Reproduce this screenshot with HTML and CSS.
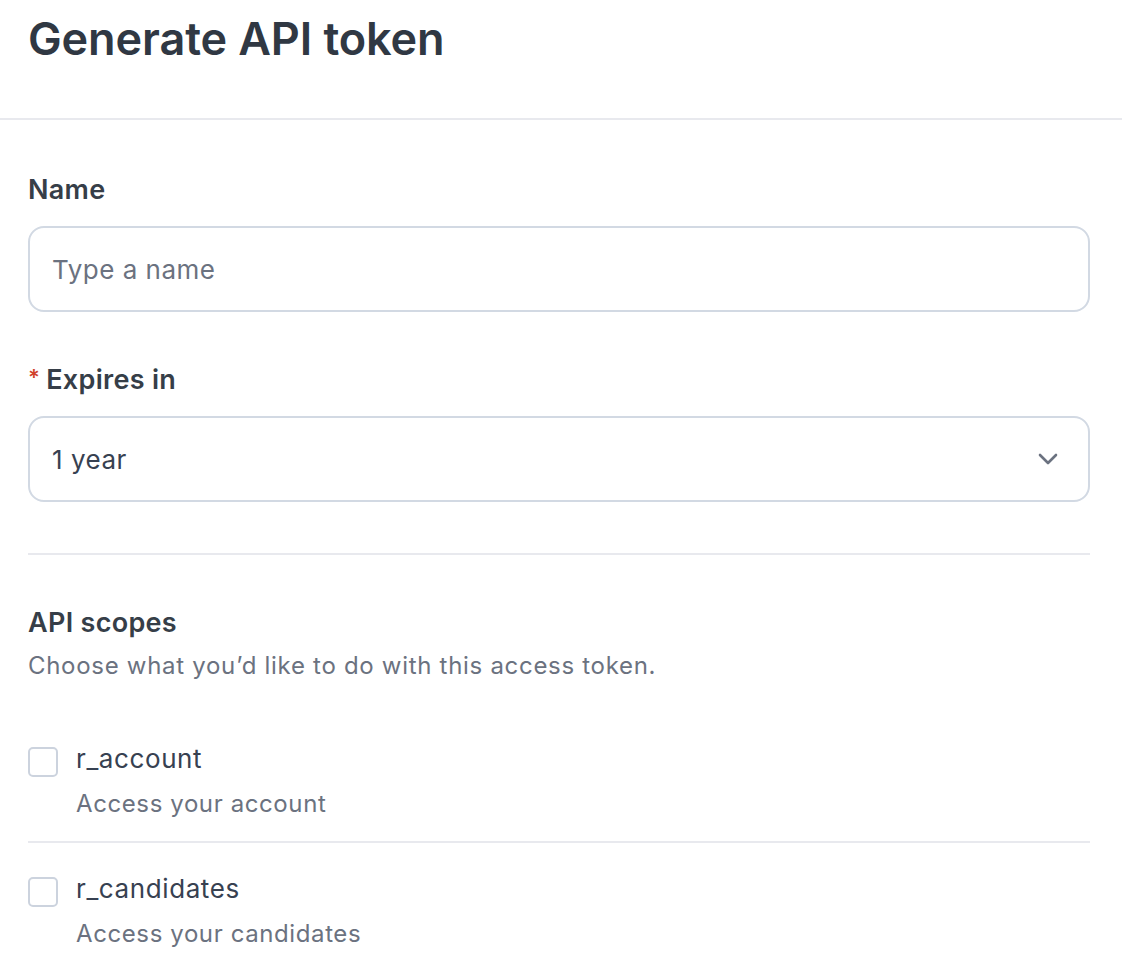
FILE: index.html
```html
<!DOCTYPE html>
<html>
<head>
<meta charset="utf-8">
<link rel="stylesheet" href="styles.css">
</head>
<body>
<header class="header">
  <h1 class="title">Generate API token</h1>
</header>
<main class="form">
  <div class="field">
    <label class="label">Name</label>
    <div class="input"><span class="placeholder">Type a name</span></div>
  </div>
  <div class="field">
    <label class="label"><span class="req">*</span>Expires in</label>
    <div class="input select">
      <span class="value">1 year</span>
      <svg class="chev" width="20" height="12" viewBox="0 0 20 12"><path d="M2 2 L10 10 L18 2" fill="none" stroke="#6b7280" stroke-width="2.6" stroke-linecap="round" stroke-linejoin="round"/></svg>
    </div>
  </div>
  <hr class="divider">
  <section class="scopes">
    <h2 class="label">API scopes</h2>
    <p class="help">Choose what you’d like to do with this access token.</p>
    <div class="scope">
      <span class="box"></span>
      <div class="scope-text">
        <div class="scope-name">r_account</div>
        <div class="scope-desc">Access your account</div>
      </div>
    </div>
    <div class="scope">
      <span class="box"></span>
      <div class="scope-text">
        <div class="scope-name">r_candidates</div>
        <div class="scope-desc">Access your candidates</div>
      </div>
    </div>
  </section>
</main>
</body>
</html>
```
FILE: styles.css
```css
html, body { margin: 0; padding: 0; background: #fff; }
body { font-family: Inter, "Noto Sans", sans-serif; color: #374151; }
.header { border-bottom: 2px solid #e8e9ee; padding: 8px 28px 48px; }
.title { margin: 0; font-size: 45px; line-height: 62px; font-weight: 600; color: #303843; letter-spacing: -0.1px; }
.form { padding: 0 32px 0 28px; }
.field { display: flex; flex-direction: column; }
.field:first-child { padding-top: 52px; }
.field + .field { margin-top: 50px; }
.label { margin: 0; font-size: 27px; line-height: 36px; font-weight: 600; color: #363e48; display: flex; align-items: center; letter-spacing: 0.3px; }
.req { color: #d0412a; font-size: 22px; margin-right: 6px; position: relative; top: -3px; }
.input { margin-top: 18px; height: 86px; box-sizing: border-box; border: 2px solid #d2d9e3; border-radius: 16px; display: flex; align-items: center; padding: 0 30px 0 22px; font-size: 26px; letter-spacing: 0.5px; }
.placeholder { color: #6b7280; }
.value { color: #374151; flex: 1; }
.select { justify-content: space-between; }
.chev { display: block; }
.divider { border: 0; border-top: 2px solid #e8e9ee; margin: 51px 0 0; }
.scopes { padding-top: 50px; }
.help { margin: 8px 0 0; font-size: 24px; line-height: 34px; color: #6b7280; letter-spacing: 0.7px; }
.scope { display: flex; align-items: flex-start; gap: 18px; padding: 59px 0 21px; }
.scope + .scope { border-top: 2px solid #e8e9ee; padding-top: 29px; }
.box { width: 30px; height: 30px; box-sizing: border-box; border: 2px solid #ccd3de; border-radius: 5px; margin-top: 5px; flex: none; }
.scope-name { font-size: 26px; line-height: 34px; color: #374151; letter-spacing: 0.6px; }
.scope-desc { margin-top: 12px; font-size: 24px; line-height: 32px; color: #6b7280; letter-spacing: 0.6px; }
```
